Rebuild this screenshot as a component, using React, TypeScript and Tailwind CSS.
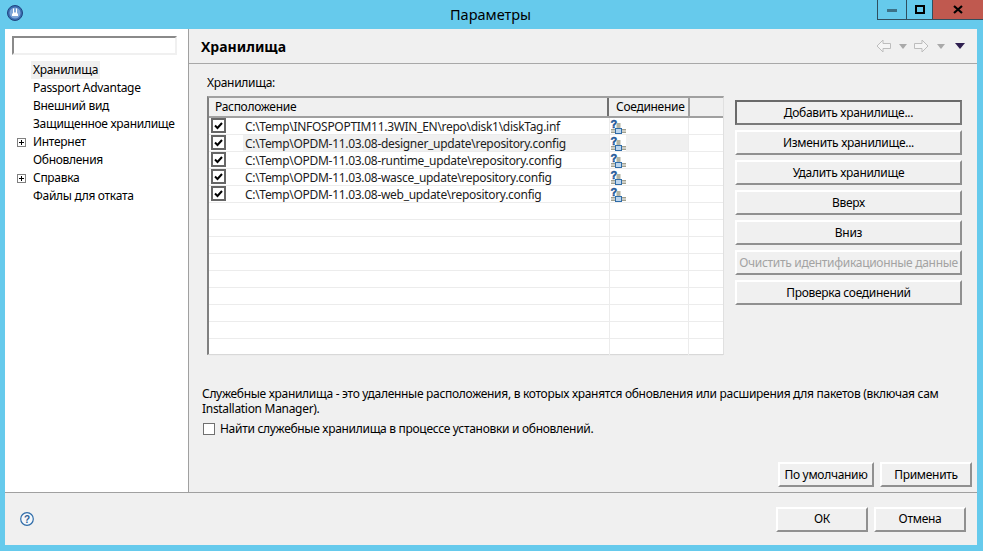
const repos = [
  'C:\\Temp\\INFOSPOPTIM11.3WIN_EN\\repo\\disk1\\diskTag.inf',
  'C:\\Temp\\OPDM-11.03.08-designer_update\\repository.config',
  'C:\\Temp\\OPDM-11.03.08-runtime_update\\repository.config',
  'C:\\Temp\\OPDM-11.03.08-wasce_update\\repository.config',
  'C:\\Temp\\OPDM-11.03.08-web_update\\repository.config',
];

const treeItems = [
  { label: 'Хранилища', selected: true },
  { label: 'Passport Advantage' },
  { label: 'Внешний вид' },
  { label: 'Защищенное хранилище' },
  { label: 'Интернет', expandable: true },
  { label: 'Обновления' },
  { label: 'Справка', expandable: true },
  { label: 'Файлы для отката' },
];

const sideButtons = [
  { label: 'Добавить хранилище...', isDefault: true },
  { label: 'Изменить хранилище...' },
  { label: 'Удалить хранилище' },
  { label: 'Вверх' },
  { label: 'Вниз' },
  { label: 'Очистить идентификационные данные', disabled: true },
  { label: 'Проверка соединений' },
];

function AppIcon() {
  return (
    <svg width="16" height="16" viewBox="0 0 16 16">
      <circle cx="8" cy="8" r="7.5" fill="#3b6cb0" stroke="#1f4480" />
      <circle cx="8" cy="8" r="5.5" fill="#7fa6d8" />
      <path d="M6 3.5h1v4h2v-4h1v5h1v2.5h-6v-2.5h1z" fill="#fff" />
    </svg>
  );
}

function WinButtons() {
  return (
    <div className="flex h-[20px] items-stretch border-b border-[#2f4f5f]">
      <div className="flex w-[29px] items-center justify-center border-l border-[#2f4f5f]">
        <div className="mt-[2px] h-[3px] w-[10px] bg-[#3c7288]" />
      </div>
      <div className="flex w-[26px] items-center justify-center border-l border-[#2f4f5f]">
        <div className="h-[9px] w-[10px] border-2 border-black" />
      </div>
      <div className="flex w-[51px] items-center justify-center border-l border-[#2f4f5f] bg-[#c0594f]">
        <svg width="10" height="9" viewBox="0 0 10 9">
          <path d="M1 1l8 7M9 1l-8 7" stroke="#000" strokeWidth="2.2" />
        </svg>
      </div>
    </div>
  );
}

function Expander() {
  return (
    <svg width="9" height="9" viewBox="0 0 9 9" className="shrink-0">
      <rect x="0.5" y="0.5" width="8" height="8" fill="#fff" stroke="#808080" />
      <path d="M2 4.5h5M4.5 2v5" stroke="#000" />
    </svg>
  );
}

function Checkbox() {
  return (
    <div className="flex h-[15px] w-[15px] items-center justify-center border-2 border-[#666666] bg-white">
      <svg width="9" height="8" viewBox="0 0 9 8">
        <path d="M1 3.5l2.5 2.5L8 1" fill="none" stroke="#000" strokeWidth="2" />
      </svg>
    </div>
  );
}

function ConnectionIcon() {
  return (
    <svg width="16" height="16" viewBox="0 0 16 16" className="block bg-white">
      <text x="0.5" y="9.5" fontSize="11" fontWeight="700" fill="#1f5a9a" stroke="#1f5a9a" strokeWidth="0.5" fontFamily="Liberation Sans, sans-serif">?</text>
      <rect x="6.5" y="5" width="4" height="5" fill="#b4b4a4" />
      <rect x="5.5" y="10.5" width="6" height="5" fill="#bcd6ee" stroke="#2f6ca8" />
      <rect x="1" y="11" width="4" height="1.5" fill="#a0a090" />
      <rect x="1" y="13.5" width="4" height="1.5" fill="#a0a090" />
      <rect x="12" y="11" width="4" height="1.5" fill="#a0a090" />
      <rect x="12" y="13.5" width="4" height="1.5" fill="#a0a090" />
    </svg>
  );
}

function NavArrow({ flip }: { flip?: boolean }) {
  return (
    <svg width="15" height="14" viewBox="0 0 15 14" className={flip ? '-scale-x-100' : ''}>
      <path d="M1 7l6-6v3.5h7.5v5H7V13z" fill="#f5f5f5" stroke="#bdbdbd" />
    </svg>
  );
}

function Caret({ dark }: { dark?: boolean }) {
  if (dark) {
    return (
      <svg width="10" height="6" viewBox="0 0 10 6" className="block">
        <path d="M0 0h10L5 6z" fill="#2f1f50" />
      </svg>
    );
  }
  return (
    <svg width="8" height="5" viewBox="0 0 8 5" className="block">
      <path d="M0 0h8L4 5z" fill="#a9a9a9" />
    </svg>
  );
}

function Btn({ label, isDefault, disabled, className = '' }: { label: string; isDefault?: boolean; disabled?: boolean; className?: string }) {
  const edge = isDefault
    ? 'border-2 border-t-[#6a6a6a] border-l-[#6a6a6a] border-b-[#7a7a7a] border-r-[#7a7a7a]'
    : 'border-2 border-t-white border-l-white border-b-[#909090] border-r-[#909090]';
  return (
    <button className={`flex items-center justify-center bg-[#f0f0f0] text-[12px] tracking-[-0.3px] whitespace-nowrap ${edge} ${disabled ? 'text-[#a3a3a3]' : 'text-black'} ${className}`}>
      {label}
    </button>
  );
}

export default function App() {
  return (
    <div className="flex h-[551px] w-[983px] flex-col overflow-hidden bg-[#66caec] font-['Noto_Sans',sans-serif] text-[12px] tracking-[-0.3px] text-black">
      {/* title bar */}
      <div className="grid h-[29px] shrink-0 grid-cols-[1fr_auto_1fr] items-start">
        <div className="pl-[7px] pt-[5px]">
          <AppIcon />
        </div>
        <div className="pt-[4px] pr-[2px] text-[14.5px] leading-[20px] tracking-normal">Параметры</div>
        <div className="flex justify-end">
          <WinButtons />
        </div>
      </div>

      <div className="mb-[6px] ml-[5px] mr-[6px] flex min-h-0 flex-1 flex-col">
        <div className="flex min-h-0 flex-1 border-b border-[#a0a0a0]">
          {/* left tree */}
          <div className="w-[184px] shrink-0 border-r border-[#a0a0a0] bg-white">
            <div className="ml-[7px] mt-[7px] h-[19px] w-[165px] border-2 border-t-[#8a8a8a] border-l-[#8a8a8a] border-r-[#f0f0f0] border-b-[#f0f0f0]" />
            <div className="mt-[6px]">
              {treeItems.map((item) => (
                <div key={item.label} className="flex h-[18px] items-center pl-[12px]">
                  <div className="flex w-[14px] items-center">{item.expandable && <Expander />}</div>
                  <span className={`px-[2px] leading-[18px] ${item.selected ? 'bg-[#f0f0f0]' : ''}`}>{item.label}</span>
                </div>
              ))}
            </div>
          </div>

          {/* right page */}
          <div className="flex min-w-0 flex-1 flex-col bg-[#f0f0f0]">
            <div className="flex h-[35px] shrink-0 items-center justify-between border-b border-[#a8a8a8] pl-[12px] pr-[12px]">
              <span className="text-[14px] font-bold tracking-normal">Хранилища</span>
              <div className="flex items-center">
                <NavArrow />
                <span className="ml-[8px] mr-[7px]"><Caret /></span>
                <NavArrow flip />
                <span className="ml-[8px] mr-[10px]"><Caret /></span>
                <Caret dark />
              </div>
            </div>

            <div className="flex min-h-0 flex-1 flex-col pl-[13px] pr-[5px]">
              <div className="flex">
                <div className="w-[533px] pl-[5px]">
                  <div className="mt-[10px] h-[18px] leading-[18px]">Хранилища:</div>
                  <div className="mt-[4px] h-[259px] w-[517px] border-2 border-r border-b border-t-[#a0a0a0] border-l-[#808080] border-r-[#e0e0e0] border-b-[#d8d8d8] bg-white">
                    <div className="flex h-[20px] border-b-2 border-[#a0a0a0] bg-[#f0f0f0] leading-[17px]">
                      <div className="w-[400px] border-r-2 border-[#707070] pl-[6px]">Расположение</div>
                      <div className="w-[81px] border-r-2 border-[#a0a0a0] pl-[7px]">Соединение</div>
                    </div>
                    {Array.from({ length: 14 }).map((_, i) => (
                      <div key={i} className="flex h-[17px] border-b border-[#ececec]">
                        <div className="flex w-[34px] items-start pl-[2px]">{i < 5 && <Checkbox />}</div>
                        <div className={`w-[366px] truncate pl-[2px] leading-[17px] text-[#1c1c1c] ${i === 1 ? 'bg-[#f0f0f0]' : ''}`}>{repos[i]}</div>
                        <div className={`w-[80px] border-l border-r border-[#ececec] ${i === 1 ? 'bg-[#f0f0f0]' : ''}`}>
                          {i < 5 && (
                            <div className="w-[16px]">
                              <ConnectionIcon />
                            </div>
                          )}
                        </div>
                      </div>
                    ))}
                  </div>
                </div>

                <div className="mt-[36px] flex h-[205px] w-[227px] flex-col gap-[5px]">
                  {sideButtons.map((b) => (
                    <Btn key={b.label} label={b.label} isDefault={b.isDefault} disabled={b.disabled} className="h-[25px] w-full" />
                  ))}
                </div>
              </div>

              <p className="mt-[31px] w-[745px] leading-[15px]">
                Служебные хранилища - это удаленные расположения, в которых хранятся обновления или расширения для пакетов (включая сам Installation Manager).
              </p>
              <label className="mt-[4px] flex h-[18px] items-center">
                <span className="ml-[1px] h-[12px] w-[12px] border border-[#707070] bg-white" />
                <span className="ml-[5px]">Найти служебные хранилища в процессе установки и обновлений.</span>
              </label>

              <div className="mt-[24px] flex justify-end gap-[6px]">
                <Btn label="По умолчанию" className="h-[25px] w-[96px]" />
                <Btn label="Применить" className="h-[25px] w-[92px]" />
              </div>
            </div>
          </div>
        </div>

        {/* footer */}
        <div className="flex h-[52px] shrink-0 items-center justify-between bg-[#f0f0f0] pl-[15px] pr-[11px]">
          <svg width="14" height="14" viewBox="0 0 14 14">
            <circle cx="7" cy="7" r="6.3" fill="#f4f7fb" stroke="#2f6ca8" strokeWidth="1.2" />
            <text x="7" y="10.5" textAnchor="middle" fontSize="10" fontWeight="700" fill="#2f5f96" fontFamily="Liberation Sans, sans-serif">?</text>
          </svg>
          <div className="flex gap-[6px]">
            <Btn label="ОК" className="h-[25px] w-[92px]" />
            <Btn label="Отмена" className="h-[25px] w-[92px]" />
          </div>
        </div>
      </div>
    </div>
  );
}
